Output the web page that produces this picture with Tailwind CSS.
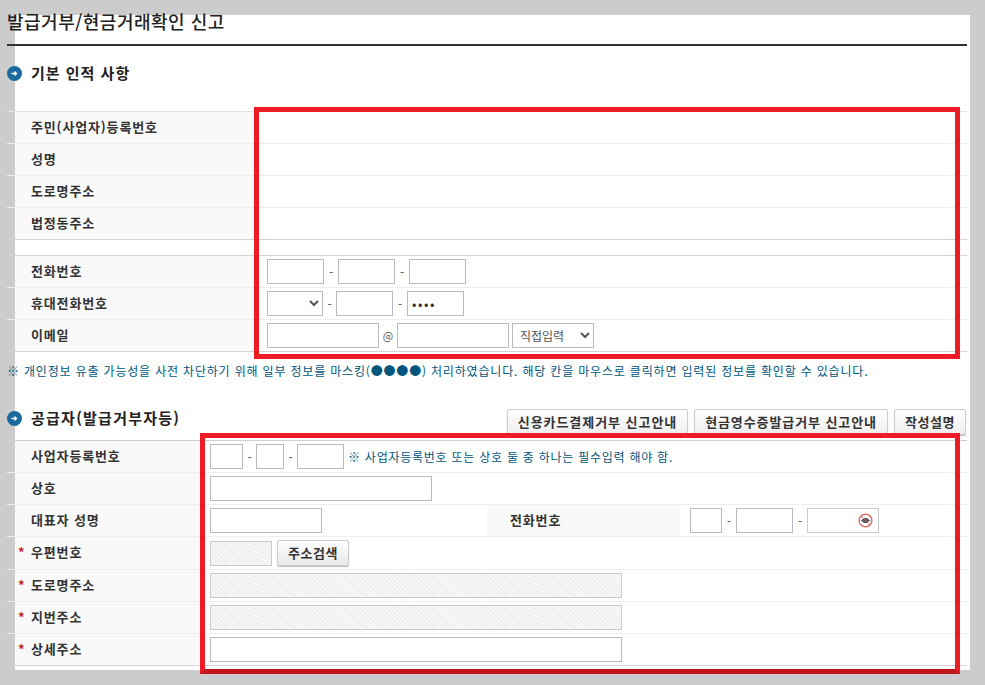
<!DOCTYPE html>
<html lang="ko">
<head>
  <meta charset="UTF-8">
  <title>발급거부/현금거래확인 신고</title>
  <script src="https://cdn.jsdelivr.net/npm/@tailwindcss/browser@4"></script>
</head>
<body class="bg-[#cccccc] font-['Noto_Sans_CJK_KR','Liberation_Sans',sans-serif] text-[#333333]">
<div class="relative w-[985px] h-[685px] overflow-hidden pt-[15px] pl-[15px]">
  <!-- white sheet -->
  <div class="w-[955px] h-[655px] bg-white flow-root">
    <div class="-ml-2 w-[960px] flow-root">

      <!-- Title -->
      <div class="h-[31px] border-b-2 border-[#333333] flow-root">
        <h1 class="-mt-[2px] text-[18px] leading-[16px] font-medium tracking-[0.5px] text-[#222222]">발급거부/현금거래확인 신고</h1>
      </div>

      <!-- Section 1 -->
      <div class="mt-[19px] h-[16px] flex items-center gap-[9px]">
        <svg class="w-[15px] h-[15px] shrink-0" viewBox="0 0 15 15"><circle cx="7.5" cy="7.5" r="7.5" fill="#1a6a9f"/><path d="M4.5 7.5h5M7.5 5.5l2 2-2 2" fill="none" stroke="#ffffff" stroke-width="1.3"/></svg>
        <h2 class="text-[15px] font-bold tracking-[1px] text-[#222222]">기본 인적 사항</h2>
      </div>

      <div class="mt-[30px] border-t border-[#e4e4e4]">
        <div class="flex h-[32px] border-b border-[#eeeeee]">
          <div class="ml-2 w-[239px] bg-[#f9f9f9] pl-4 pb-[2px] flex items-center text-[13px] tracking-[0.85px] font-bold">주민(사업자)등록번호</div>
        </div>
        <div class="flex h-[32px] border-b border-[#eeeeee]">
          <div class="ml-2 w-[239px] bg-[#f9f9f9] pl-4 pb-[2px] flex items-center text-[13px] tracking-[0.85px] font-bold">성명</div>
        </div>
        <div class="flex h-[32px] border-b border-[#eeeeee]">
          <div class="ml-2 w-[239px] bg-[#f9f9f9] pl-4 pb-[2px] flex items-center text-[13px] tracking-[0.85px] font-bold">도로명주소</div>
        </div>
        <div class="flex h-[32px] border-b border-[#d4d4d4]">
          <div class="ml-2 w-[239px] bg-[#f9f9f9] pl-4 pb-[2px] flex items-center text-[13px] tracking-[0.85px] font-bold">법정동주소</div>
        </div>
      </div>

      <div class="mt-[15px] border-t border-[#d4d4d4]">
        <div class="flex h-[32px] border-b border-[#eeeeee]">
          <div class="ml-2 w-[239px] bg-[#f9f9f9] pl-4 pb-[2px] flex items-center text-[13px] tracking-[0.85px] font-bold">전화번호</div>
          <div class="pl-[13px] flex items-center text-[12px] text-[#555555]">
            <input class="w-[57px] h-[25px] border border-[#bbbbbb] bg-white">
            <span class="w-[14px] text-center">-</span>
            <input class="w-[57px] h-[25px] border border-[#bbbbbb] bg-white">
            <span class="w-[14px] text-center">-</span>
            <input class="w-[57px] h-[25px] border border-[#bbbbbb] bg-white">
          </div>
        </div>
        <div class="flex h-[32px] border-b border-[#eeeeee]">
          <div class="ml-2 w-[239px] bg-[#f9f9f9] pl-4 pb-[2px] flex items-center text-[13px] tracking-[0.85px] font-bold">휴대전화번호</div>
          <div class="pl-[13px] flex items-center text-[12px] text-[#555555]">
            <select class="w-[56px] h-[25px] border border-[#bbbbbb] bg-white"></select>
            <span class="w-[13px] text-center">-</span>
            <input class="w-[57px] h-[25px] border border-[#bbbbbb] bg-white">
            <span class="w-[14px] text-center">-</span>
            <input class="w-[57px] h-[25px] border border-[#bbbbbb] bg-white pl-[4px] text-[13px] tracking-[1.6px] text-[#333333]" value="••••">
          </div>
        </div>
        <div class="flex h-[32px] border-b border-[#d4d4d4]">
          <div class="ml-2 w-[239px] bg-[#f9f9f9] pl-4 pb-[2px] flex items-center text-[13px] tracking-[0.85px] font-bold">이메일</div>
          <div class="pl-[13px] flex items-center text-[11px] text-[#555555]">
            <input class="w-[112px] h-[25px] border border-[#bbbbbb] bg-white">
            <span class="w-[18px] text-center">@</span>
            <input class="w-[112px] h-[25px] border border-[#bbbbbb] bg-white">
            <select class="ml-[3px] w-[82px] h-[25px] pl-[3px] border border-[#bbbbbb] bg-white text-[12px]">
              <option>직접입력</option>
            </select>
          </div>
        </div>
      </div>

      <p class="mt-[10px] h-[18px] text-[12px] leading-[18px] tracking-[0.82px] text-[#00567d] whitespace-nowrap">※ 개인정보 유출 가능성을 사전 차단하기 위해 일부 정보를 마스킹(●●●●) 처리하였습니다. 해당 칸을 마우스로 클릭하면 입력된 정보를 확인할 수 있습니다.</p>

      <!-- Section 2 -->
      <div class="mt-[29px] h-[31px] flex items-start">
        <div class="-mt-[2px] flex items-center gap-[9px]">
          <svg class="w-[15px] h-[15px] shrink-0" viewBox="0 0 15 15"><circle cx="7.5" cy="7.5" r="7.5" fill="#1a6a9f"/><path d="M4.5 7.5h5M7.5 5.5l2 2-2 2" fill="none" stroke="#ffffff" stroke-width="1.3"/></svg>
          <h2 class="text-[15px] font-bold tracking-[1.25px] text-[#222222]">공급자(발급거부자등)</h2>
        </div>
        <div class="ml-auto mr-[1px] flex gap-[6px]">
          <button class="w-[181px] h-[26px] border border-[#cccccc] rounded-[2px] bg-gradient-to-b from-white to-[#eeeeee] shadow-[0_1px_1px_#bbbbbb] text-[13px] tracking-[0.95px] font-bold text-[#333333]">신용카드결제거부 신고안내</button>
          <button class="w-[194px] h-[26px] border border-[#cccccc] rounded-[2px] bg-gradient-to-b from-white to-[#eeeeee] shadow-[0_1px_1px_#bbbbbb] text-[13px] tracking-[0.9px] font-bold text-[#333333]">현금영수증발급거부 신고안내</button>
          <button class="w-[72px] h-[26px] border border-[#cccccc] rounded-[2px] bg-gradient-to-b from-white to-[#eeeeee] shadow-[0_1px_1px_#bbbbbb] text-[13px] tracking-[0.6px] font-bold text-[#333333]">작성설명</button>
        </div>
      </div>

      <div class="border-t border-[#cfcfcf]">
        <div class="flex h-[32px] border-b border-[#eeeeee]">
          <div class="ml-2 w-[185px] bg-[#f9f9f9] pl-4 pb-[2px] flex items-center text-[13px] tracking-[0.85px] font-bold">사업자등록번호</div>
          <div class="pl-[10px] flex items-center text-[12px] text-[#555555]">
            <input class="w-[33px] h-[25px] border border-[#bbbbbb] bg-white">
            <span class="w-[13px] text-center">-</span>
            <input class="w-[28px] h-[25px] border border-[#bbbbbb] bg-white">
            <span class="w-[13px] text-center">-</span>
            <input class="w-[47px] h-[25px] border border-[#bbbbbb] bg-white">
            <span class="ml-[4px] text-[#00567d] tracking-[0.75px] whitespace-nowrap">※ 사업자등록번호 또는 상호 둘 중 하나는 필수입력 해야 함.</span>
          </div>
        </div>
        <div class="flex h-[32px] border-b border-[#eeeeee]">
          <div class="ml-2 w-[185px] bg-[#f9f9f9] pl-4 pb-[2px] flex items-center text-[13px] tracking-[0.85px] font-bold">상호</div>
          <div class="pl-[10px] flex items-center">
            <input class="w-[222px] h-[25px] border border-[#bbbbbb] bg-white">
          </div>
        </div>
        <div class="flex h-[32px] border-b border-[#eeeeee]">
          <div class="ml-2 w-[185px] bg-[#f9f9f9] pl-4 pb-[2px] flex items-center text-[13px] tracking-[0.85px] font-bold">대표자 성명</div>
          <div class="pl-[10px] w-[287px] flex items-center">
            <input class="w-[112px] h-[25px] border border-[#bbbbbb] bg-white">
          </div>
          <div class="w-[193px] bg-[#f9f9f9] pl-[23px] pb-[2px] flex items-center text-[13px] tracking-[0.85px] font-bold">전화번호</div>
          <div class="pl-[10px] flex items-center text-[12px] text-[#555555]">
            <input class="w-[32px] h-[25px] border border-[#bbbbbb] bg-white">
            <span class="w-[14px] text-center">-</span>
            <input class="w-[57px] h-[25px] border border-[#bbbbbb] bg-white">
            <span class="w-[14px] text-center">-</span>
            <div class="w-[72px] h-[25px] border border-[#cccccc] bg-white flex items-center justify-end pr-[5px]">
              <svg class="w-[15px] h-[15px]" viewBox="0 0 15 15"><circle cx="7.5" cy="7.5" r="6.4" fill="none" stroke="#e0655f" stroke-width="1.3"/><path d="M2.5 7.5q5-4.6 10 0q-5 4.6-10 0z" fill="#77717a"/><circle cx="7.5" cy="7.5" r="2.6" fill="#55505c"/><path d="M3 3l9 9" stroke="#e0655f" stroke-width="0.9"/></svg>
            </div>
          </div>
        </div>
        <div class="flex h-[33px] border-b border-[#eeeeee]">
          <div class="ml-2 w-[185px] bg-[#f9f9f9] pl-4 pb-[2px] flex items-center text-[13px] tracking-[0.85px] font-bold relative"><span class="absolute left-[3px] text-[#c8202a]">*</span>우편번호</div>
          <div class="pl-[10px] flex items-center">
            <div class="w-[62px] h-[25px] border border-[#cccccc] bg-[repeating-linear-gradient(45deg,#ececec_0,#ececec_1px,#f7f7f7_1px,#f7f7f7_3px)]"></div>
            <button class="ml-[5px] w-[72px] h-[26px] border border-[#cccccc] rounded-[2px] bg-gradient-to-b from-white to-[#e8e8e8] shadow-[0_1px_1px_#bbbbbb] text-[13px] tracking-[0.6px] font-bold text-[#333333]">주소검색</button>
          </div>
        </div>
        <div class="flex h-[32px] border-b border-[#eeeeee]">
          <div class="ml-2 w-[185px] bg-[#f9f9f9] pl-4 pb-[2px] flex items-center text-[13px] tracking-[0.85px] font-bold relative"><span class="absolute left-[3px] text-[#c8202a]">*</span>도로명주소</div>
          <div class="pl-[10px] flex items-center">
            <div class="w-[412px] h-[25px] border border-[#cccccc] bg-[repeating-linear-gradient(45deg,#ececec_0,#ececec_1px,#f7f7f7_1px,#f7f7f7_3px)]"></div>
          </div>
        </div>
        <div class="flex h-[32px] border-b border-[#eeeeee]">
          <div class="ml-2 w-[185px] bg-[#f9f9f9] pl-4 pb-[2px] flex items-center text-[13px] tracking-[0.85px] font-bold relative"><span class="absolute left-[3px] text-[#c8202a]">*</span>지번주소</div>
          <div class="pl-[10px] flex items-center">
            <div class="w-[412px] h-[25px] border border-[#cccccc] bg-[repeating-linear-gradient(45deg,#ececec_0,#ececec_1px,#f7f7f7_1px,#f7f7f7_3px)]"></div>
          </div>
        </div>
        <div class="flex h-[32px] border-b border-[#d4d4d4]">
          <div class="ml-2 w-[185px] bg-[#f9f9f9] pl-4 pb-[2px] flex items-center text-[13px] tracking-[0.85px] font-bold relative"><span class="absolute left-[3px] text-[#c8202a]">*</span>상세주소</div>
          <div class="pl-[10px] flex items-center">
            <input class="w-[412px] h-[25px] border border-[#bbbbbb] bg-white">
          </div>
        </div>
      </div>
    </div>
  </div>

  <!-- red annotation boxes drawn over the form -->
  <div class="absolute left-[254px] top-[107px] w-[706px] h-[252px] border-[5px] border-[#ed1c24]"></div>
  <div class="absolute left-[200px] top-[433px] w-[760px] h-[241px] border-[5px] border-[#ed1c24] border-b-[#c1161e]"></div>
</div>
</body>
</html>
